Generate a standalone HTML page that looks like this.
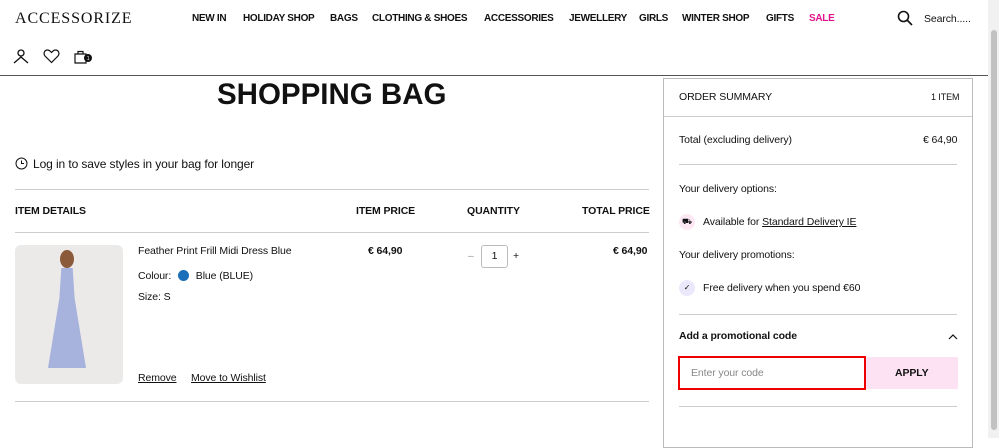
<!DOCTYPE html>
<html><head><style>
*{margin:0;padding:0;box-sizing:border-box}
body{width:999px;height:438px;overflow:hidden;background:#fff;font-family:"Liberation Sans",sans-serif;color:#111;position:relative;font-size:10.5px;letter-spacing:-0.1px}
.a{position:absolute;white-space:nowrap}
.b{font-weight:bold}
.hr{position:absolute;height:1px;background:#ccc}
.n span{position:absolute}
</style></head><body>
<div class="a" style="left:15px;top:10px;font-family:'Liberation Serif',serif;font-size:16px;letter-spacing:0.9px">ACCESSORIZE</div>
<div class="a b n" style="top:13px;left:0;font-size:10px;letter-spacing:-0.3px">
<span style="left:192px">NEW IN</span>
<span style="left:243px">HOLIDAY SHOP</span>
<span style="left:330px">BAGS</span>
<span style="left:372px">CLOTHING &amp; SHOES</span>
<span style="left:484px">ACCESSORIES</span>
<span style="left:569px">JEWELLERY</span>
<span style="left:639px">GIRLS</span>
<span style="left:682px">WINTER SHOP</span>
<span style="left:766px">GIFTS</span>
<span style="left:809px;color:#e0138c">SALE</span>
</div>
<svg class="a" style="left:897px;top:10px" width="16" height="16"><circle cx="6.5" cy="6.5" r="5" fill="none" stroke="#111" stroke-width="1.6"/><path d="M10 10l5 5" stroke="#111" stroke-width="1.6"/></svg>
<div class="a" style="left:924px;top:13px">Search.....</div>
<svg class="a" style="left:13px;top:48px" width="16" height="16"><circle cx="8" cy="5" r="3" fill="none" stroke="#111" stroke-width="1.3"/><path d="M1 15l7-6 7 6" fill="none" stroke="#111" stroke-width="1.3"/></svg>
<svg class="a" style="left:43px;top:48px" width="17" height="16"><path d="M8.5 14.5L2 8C0 5.5 1.5 2 4.5 2c2 0 3 1.5 4 2.5 1-1 2-2.5 4-2.5 3 0 4.5 3.5 2.5 6z" fill="none" stroke="#111" stroke-width="1.2"/></svg>
<svg class="a" style="left:73px;top:48px" width="22" height="16"><path d="M2 6h11v9H2z M5 6V3.5h5V6" fill="none" stroke="#111" stroke-width="1.2"/><circle cx="15" cy="10" r="4" fill="#111"/><text x="13.8" y="12" font-size="5" fill="#fff" font-family="Liberation Sans">1</text></svg>
<div style="position:absolute;left:0;top:75px;width:988px;height:1px;background:#555"></div>
<div style="position:absolute;left:988px;top:0;width:11px;height:438px;background:#f1f1f1"></div>
<div style="position:absolute;left:991px;top:30px;width:6px;height:400px;background:#c1c1c1;border-radius:3px"></div>
<div class="a b" style="left:217px;top:78px;font-size:29.5px;letter-spacing:0">SHOPPING BAG</div>
<svg class="a" style="left:15px;top:157px" width="13" height="13"><circle cx="6.5" cy="6.5" r="5.5" fill="none" stroke="#111"/><path d="M6.5 3.5v3h2.5" fill="none" stroke="#111"/></svg>
<div class="a" style="left:33px;top:157px;font-size:12px">Log in to save styles in your bag for longer</div>
<div class="hr" style="left:15px;top:189px;width:634px"></div>
<div class="a b" style="left:15px;top:205px">ITEM DETAILS</div>
<div class="a b" style="left:356px;top:205px">ITEM PRICE</div>
<div class="a b" style="left:467px;top:205px">QUANTITY</div>
<div class="a b" style="left:582px;top:205px">TOTAL PRICE</div>
<div class="hr" style="left:15px;top:232px;width:634px"></div>
<div class="a" style="left:15px;top:245px;width:108px;height:139px;background:#eceae8;border-radius:6px"></div>
<div class="a" style="left:48px;top:268px;width:38px;height:100px;background:#a8b3dd;clip-path:polygon(35% 0,65% 0,70% 30%,100% 100%,0 100%,30% 30%)"></div>
<div class="a" style="left:60px;top:250px;width:14px;height:18px;background:#8a5a3a;border-radius:50%"></div>
<div class="a" style="left:138px;top:245px">Feather Print Frill Midi Dress Blue</div>
<div class="a" style="left:138px;top:270px">Colour: <span style="display:inline-block;width:11px;height:11px;border-radius:50%;background:#1a6fb8;vertical-align:-2px;margin:0 4px"></span> Blue (BLUE)</div>
<div class="a" style="left:138px;top:291px">Size: S</div>
<div class="a" style="left:138px;top:372px;text-decoration:underline">Remove</div>
<div class="a" style="left:191px;top:372px;text-decoration:underline">Move to Wishlist</div>
<div class="a b" style="left:368px;top:245px">€ 64,90</div>
<div class="a" style="left:468px;top:250px;color:#999">–</div>
<div class="a" style="left:481px;top:245px;width:27px;height:23px;border:1px solid #bbb;border-radius:3px;text-align:center;line-height:21px">1</div>
<div class="a" style="left:513px;top:250px">+</div>
<div class="a b" style="left:613px;top:245px">€ 64,90</div>
<div class="hr" style="left:15px;top:401px;width:634px"></div>
<div class="a" style="left:663px;top:78px;width:310px;height:370px;border:1px solid #bbb"></div>
<div class="a" style="left:679px;top:91px">ORDER SUMMARY</div>
<div class="a" style="left:931px;top:92px;font-size:9px">1 ITEM</div>
<div class="hr" style="left:664px;top:116px;width:308px"></div>
<div class="a" style="left:679px;top:134px">Total (excluding delivery)</div>
<div class="a" style="left:923px;top:134px">€ 64,90</div>
<div class="hr" style="left:679px;top:164px;width:278px"></div>
<div class="a" style="left:679px;top:183px">Your delivery options:</div>
<div class="a" style="left:679px;top:214px;width:16px;height:16px;border-radius:50%;background:#fde7f3;font-size:8px;text-align:center;line-height:16px">⛟</div>
<div class="a" style="left:703px;top:216px">Available for <span style="text-decoration:underline">Standard Delivery IE</span></div>
<div class="a" style="left:679px;top:249px">Your delivery promotions:</div>
<div class="a" style="left:679px;top:280px;width:16px;height:16px;border-radius:50%;background:#ebe8fb;font-size:8px;text-align:center;line-height:16px">✓</div>
<div class="a" style="left:703px;top:282px">Free delivery when you spend €60</div>
<div class="hr" style="left:679px;top:314px;width:278px"></div>
<div class="a b" style="left:679px;top:330px">Add a promotional code</div>
<svg class="a" style="left:948px;top:333px" width="10" height="7"><path d="M1 6l4-4 4 4" fill="none" stroke="#111" stroke-width="1.2"/></svg>
<div class="a" style="left:679px;top:357px;width:279px;height:32px;background:#fde2f3"></div>
<div class="a" style="left:678px;top:356px;width:188px;height:34px;border:2px solid #e00;background:#fff"></div>
<div class="a" style="left:691px;top:367px;color:#888">Enter your code</div>
<div class="a b" style="left:895px;top:367px">APPLY</div>
<div class="hr" style="left:679px;top:406px;width:278px"></div>
</body></html>
